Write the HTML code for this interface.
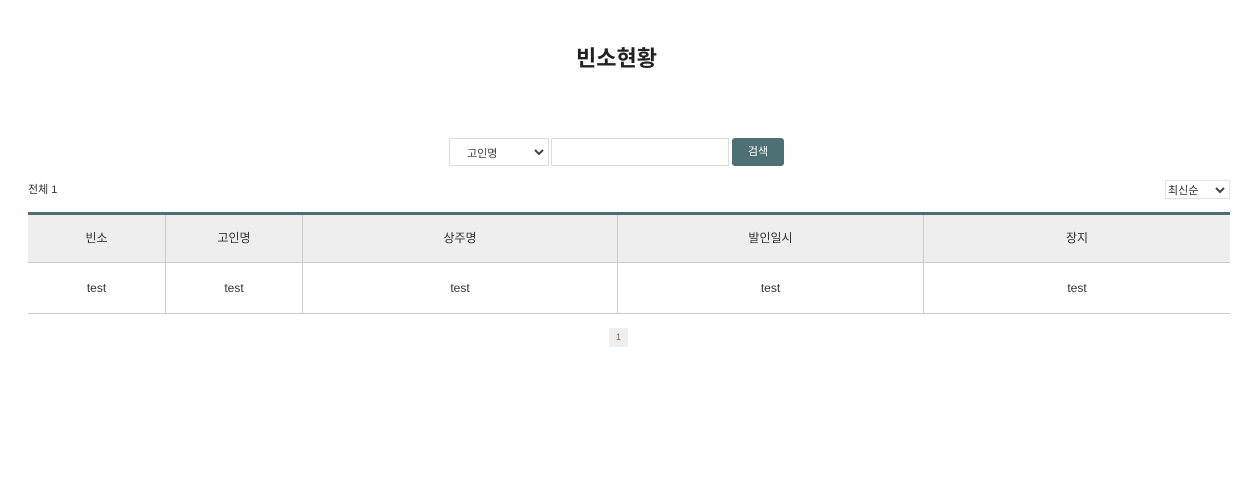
<!DOCTYPE html>
<html><head><meta charset="utf-8"><style>
body{margin:0;background:#fff;font-family:"Liberation Sans","Noto Sans CJK KR",sans-serif;color:#333;width:1250px;height:504px;position:relative;overflow:hidden}
.abs{position:absolute}
h1{position:absolute;left:0;width:1233px;top:43px;margin:0;text-align:center;font-size:22px;line-height:32px;font-weight:bold;color:#222}
.sel{left:449px;top:138px;width:98px;height:26px;border:1px solid #ddd;font-size:11px;color:#444}
.inp{left:551px;top:138px;width:176px;height:26px;border:1px solid #ddd}
.btn{left:732px;top:138px;width:52px;height:28px;background:#4d7073;border-radius:3px;color:#fff;font-size:11px;text-align:center;line-height:28px}
.c{position:absolute;text-align:center;font-size:12px;line-height:16px}
.vl{position:absolute;width:1px;background:#ccc;top:215px;height:98px}
</style></head><body>
<h1>빈소현황</h1>
<div class="abs sel"><span class="abs" style="left:17px;top:6px">고인명</span>
<svg class="abs" style="left:84px;top:9px" width="10" height="8"><path d="M1 2l4 4 4-4" stroke="#444" stroke-width="2" fill="none"/></svg></div>
<div class="abs inp"></div>
<div class="abs btn">검색</div>
<div class="abs" style="left:28px;top:181px;font-size:11px">전체 1</div>
<div class="abs" style="left:1165px;top:180px;width:63px;height:17px;border:1px solid #e4e4e4;font-size:11px"><span class="abs" style="left:2px;top:1px">최신순</span>
<svg class="abs" style="left:49px;top:5px" width="10" height="8"><path d="M1 2l4 4 4-4" stroke="#444" stroke-width="2" fill="none"/></svg></div>
<div class="abs" style="left:28px;top:212px;width:1202px;height:3px;background:#4e6e72"></div>
<div class="abs" style="left:28px;top:215px;width:1202px;height:47px;background:#eee"></div>
<div class="abs" style="left:28px;top:262px;width:1202px;height:1px;background:#ccc"></div>
<div class="abs" style="left:28px;top:313px;width:1202px;height:1px;background:#ccc"></div>
<div class="vl" style="left:165px"></div><div class="vl" style="left:302px"></div><div class="vl" style="left:617px"></div><div class="vl" style="left:923px"></div>
<div class="c" style="left:28px;width:137px;top:230px">빈소</div>
<div class="c" style="left:166px;width:136px;top:230px">고인명</div>
<div class="c" style="left:303px;width:314px;top:230px">상주명</div>
<div class="c" style="left:618px;width:305px;top:230px">발인일시</div>
<div class="c" style="left:924px;width:306px;top:230px">장지</div>
<div class="c" style="left:28px;width:137px;top:280px">test</div>
<div class="c" style="left:166px;width:136px;top:280px">test</div>
<div class="c" style="left:303px;width:314px;top:280px">test</div>
<div class="c" style="left:618px;width:305px;top:280px">test</div>
<div class="c" style="left:924px;width:306px;top:280px">test</div>
<div class="abs" style="left:609px;top:328px;width:19px;height:19px;background:#eee;font-size:9px;text-align:center;line-height:19px;color:#8a6d3b">1</div>
</body></html>
